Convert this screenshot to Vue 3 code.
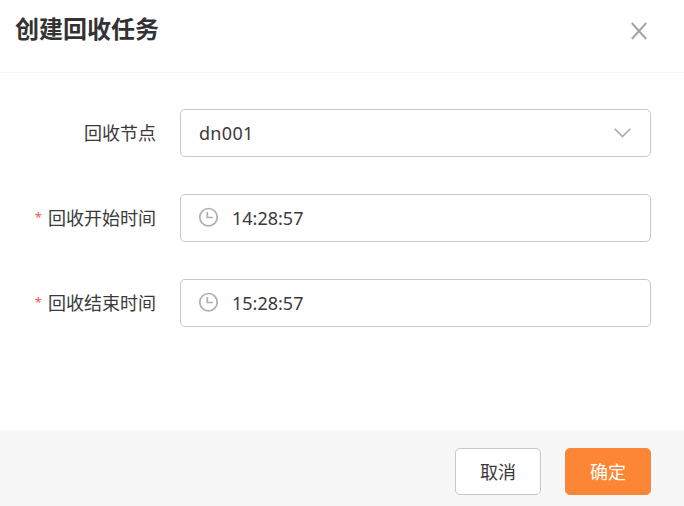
<script setup>
import { ref, computed } from 'vue'
const visible = ref(true)
const node = ref('dn001')
const startTime = ref('14:28:57')
const endTime = ref('15:28:57')
const fields = computed(() => [
  { label: '回收节点', value: node.value, type: 'select', required: false },
  { label: '回收开始时间', value: startTime.value, type: 'time', required: true },
  { label: '回收结束时间', value: endTime.value, type: 'time', required: true }
])
const close = () => {
  visible.value = false
}
</script>
<template>
  <div v-if="visible" class="dialog">
    <div class="dialog-header">
      <h3 class="dialog-title">创建回收任务</h3>
      <svg class="dialog-close" width="16" height="18" viewBox="0 0 16 18" @click="close">
        <path d="M0.8 1L15.2 17M15.2 1L0.8 17" />
      </svg>
    </div>
    <div class="dialog-body">
      <div v-for="field in fields" :key="field.label" class="form-item">
        <div class="form-label">
          <span v-if="field.required" class="form-required">*</span>
          <span>{{ field.label }}</span>
        </div>
        <div class="form-control">
          <svg v-if="field.type === 'time'" class="icon-clock" width="20" height="20" viewBox="0 0 20 20">
            <circle cx="10.5" cy="10.2" r="8.7" />
            <path d="M9.3 5V10.5H14.8" />
          </svg>
          <span class="form-value" :class="{ 'is-select': field.type === 'select' }">{{ field.value }}</span>
          <svg v-if="field.type === 'select'" class="icon-arrow" width="18" height="10" viewBox="0 0 18 10">
            <path d="M1.7 0.8L9.5 8.6L17.3 0.8" />
          </svg>
        </div>
      </div>
    </div>
    <div class="dialog-footer">
      <button class="btn" @click="close">取消</button>
      <button class="btn btn-primary" @click="close">确定</button>
    </div>
  </div>
</template>
<style>
body {
  margin: 0;
  background-color: #fff;
}
</style>
<style scoped>
.dialog {
  display: flex;
  flex-direction: column;
  height: 506px;
  font-family: 'Noto Sans', 'Noto Sans CJK SC', sans-serif;
  font-size: 18px;
  color: #3a3a3a;
}
.dialog * {
  box-sizing: border-box;
}
.dialog-header {
  display: flex;
  justify-content: space-between;
  height: 73px;
  padding: 12px 37px 0 15px;
  border-bottom: 1px solid #f5f5f5;
}
.dialog-title {
  margin: -1px 0 0;
  font-size: 24px;
  line-height: 36px;
  font-weight: 700;
  color: #333;
}
.dialog-close {
  margin-top: 10px;
  fill: none;
  stroke: #a3a3a3;
  stroke-width: 1.9;
  cursor: pointer;
}
.dialog-body {
  flex: 1;
  display: flex;
  flex-direction: column;
  gap: 37px;
  padding: 36px 33px 0 0;
}
.form-item {
  display: flex;
  height: 48px;
}
.form-label {
  display: flex;
  justify-content: flex-end;
  width: 180px;
  padding-right: 24px;
  line-height: 48px;
}
.form-required {
  margin-right: 6px;
  font-size: 13px;
  line-height: 46px;
  color: #ff4d4f;
}
.form-control {
  flex: 1;
  display: flex;
  align-items: center;
  padding: 0 19px 0 18px;
  border: 1px solid #c8c8c8;
  border-radius: 5px;
  background-color: #fff;
}
.form-value {
  flex: 1;
  line-height: 46px;
}
.form-value.is-select {
  letter-spacing: 0.3px;
}
.icon-clock {
  margin: -2px 14px 0 -1px;
  fill: none;
  stroke: #b0b0b0;
  stroke-width: 1.7;
}
.icon-arrow {
  fill: none;
  stroke: #aaa;
  stroke-width: 1.6;
}
.dialog-footer {
  display: flex;
  justify-content: flex-end;
  gap: 24px;
  height: 76px;
  padding: 18px 33px 0 0;
  background-color: #f7f7f7;
}
.btn {
  width: 86px;
  height: 47px;
  padding: 0 0 2px;
  border: 1px solid #c8c8c8;
  border-radius: 5px;
  background-color: #fff;
  font-family: inherit;
  font-size: 18px;
  color: #3a3a3a;
  cursor: pointer;
}
.btn-primary {
  border-color: #fc8635;
  background-color: #fc8635;
  color: #fff;
}
</style>
